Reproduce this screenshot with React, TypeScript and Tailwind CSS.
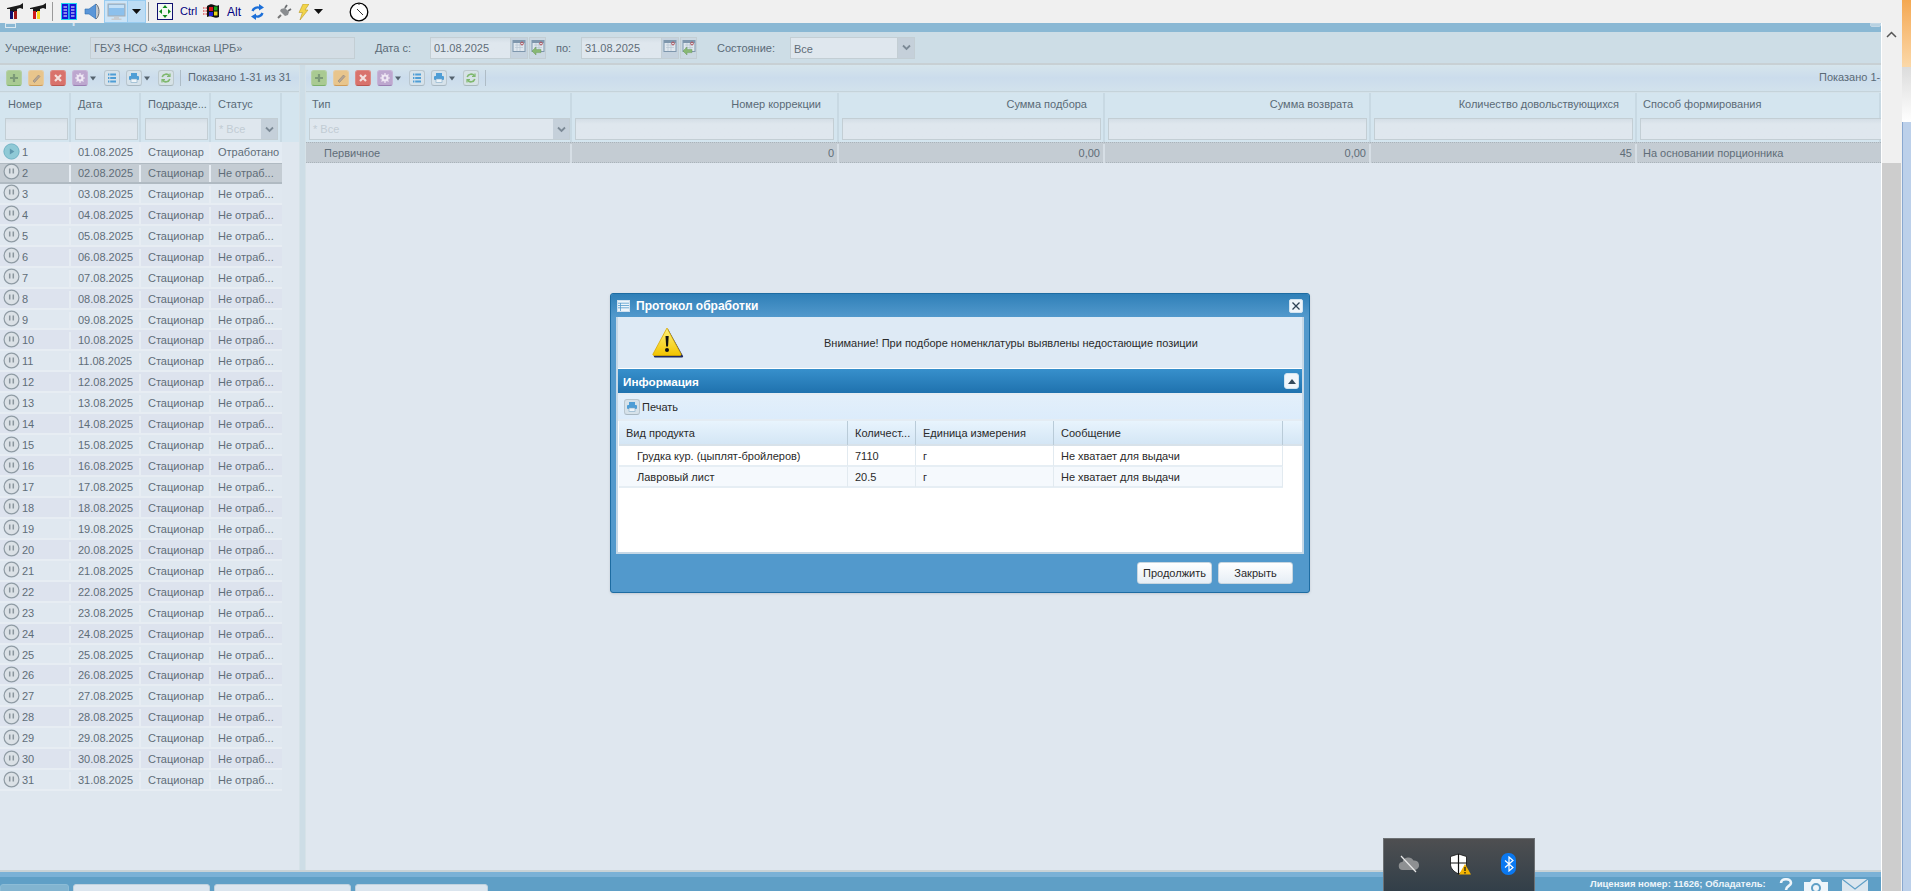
import React from "react";

const rows = Array.from({ length: 31 }, (_, i) => i + 1);

function Caret({ className = "" }: { className?: string }) {
  return (
    <svg width="8" height="5" viewBox="0 0 8 5" className={className}>
      <path d="M1 0.5h6L4 4.5z" fill="#55636e" />
    </svg>
  );
}

function Chevron() {
  return (
    <svg width="9" height="7" viewBox="0 0 9 7">
      <path d="M1 1.5L4.5 5L8 1.5" fill="none" stroke="#7c8a96" strokeWidth="1.8" />
    </svg>
  );
}

function ToolBtn({ kind }: { kind: "add" | "edit" | "del" | "gear" | "list" | "print" | "sync" }) {
  const tone = {
    add: "bg-[#a9ca92] border-b-[#7cb06a] border-[#b4cfa4]",
    edit: "bg-[#e8c58c] border-b-[#cf9c58] border-[#e6cca2]",
    del: "bg-[#d9726c] border-b-[#b95650] border-[#dc8a84]",
    gear: "bg-[#bda7cf] border-b-[#9b7fb2] border-[#c6b4d6]",
    list: "bg-[#d6e2ea] border-b-[#a9b8c2] border-[#b9c6ce]",
    print: "bg-[#d6e2ea] border-b-[#a9b8c2] border-[#b9c6ce]",
    sync: "bg-[#d6e2e6] border-b-[#a9b8bc] border-[#bcc8cc]",
  }[kind];
  return (
    <span className={`flex h-[16px] w-[16px] shrink-0 items-center justify-center rounded-[3px] border ${tone}`}>
      <svg width="12" height="12" viewBox="0 0 12 12">
        {kind === "add" && <path d="M6 2v8M2 6h8" stroke="#7c9a78" strokeWidth="2.2" />}
        {kind === "edit" && <path d="M3 9l5.5-6 1.5 1.5L4.5 10.5z" fill="#b5a595" stroke="#8f8478" strokeWidth=".6" />}
        {kind === "del" && <path d="M3 3l6 6M9 3l-6 6" stroke="#f3dfdd" strokeWidth="2.2" />}
        {kind === "gear" && (
          <g>
            <circle cx="6" cy="6" r="3.6" fill="#efe8f4" />
            <circle cx="6" cy="6" r="1.4" fill="#bda7cf" />
            <path d="M6 1v2M6 9v2M1 6h2M9 6h2M2.5 2.5l1.4 1.4M8.1 8.1l1.4 1.4M9.5 2.5L8.1 3.9M3.9 8.1l-1.4 1.4" stroke="#efe8f4" strokeWidth="1.2" />
          </g>
        )}
        {kind === "list" && <path d="M2 2.5h8M2 6h8M2 9.5h8" stroke="#4f9ed6" strokeWidth="2" strokeDasharray="1.4 .8 6 0" />}
        {kind === "print" && (
          <g>
            <rect x="3" y="1" width="6" height="3" fill="#4f9ed6" />
            <rect x="1" y="4" width="10" height="4" rx="1" fill="#4f9ed6" />
            <rect x="3" y="7" width="6" height="3.5" fill="#eef4f8" stroke="#7fa9c6" strokeWidth=".6" />
          </g>
        )}
        {kind === "sync" && (
          <g fill="none" stroke="#7fb86e" strokeWidth="1.6">
            <path d="M2.2 5A4 4 0 0 1 9.4 4" />
            <path d="M9.8 7A4 4 0 0 1 2.6 8" />
            <path d="M10 1.5v3H7M2 10.5v-3h3" strokeWidth="1.2" />
          </g>
        )}
      </svg>
    </span>
  );
}

function Toolbar({ right }: { right?: boolean }) {
  return (
    <div className={`flex h-[27px] items-center border-b border-[#c5d3da] bg-gradient-to-b from-[#d6e5ec] via-[#cbdcec] to-[#d2e2ec] ${right ? "pl-[5px]" : "pl-[6px]"}`}>
      <ToolBtn kind="add" />
      <span className="ml-[6px]"><ToolBtn kind="edit" /></span>
      <span className="ml-[6px]"><ToolBtn kind="del" /></span>
      <span className="ml-[6px]"><ToolBtn kind="gear" /></span>
      <Caret className="ml-[1px] shrink-0" />
      <span className="ml-[7px]"><ToolBtn kind="list" /></span>
      <span className="ml-[6px]"><ToolBtn kind="print" /></span>
      <Caret className="ml-[1px] shrink-0" />
      <span className="ml-[7px]"><ToolBtn kind="sync" /></span>
      <span className="ml-[6px] h-[16px] w-px shrink-0 bg-[#aebcc6]" />
      {right ? (
        <span className="ml-[1333px] shrink-0 pb-[2px] text-[#5a6a76]">Показано 1-1 из 1</span>
      ) : (
        <span className="ml-[7px] shrink-0 pb-[2px] text-[#5a6a76]">Показано 1-31 из 31</span>
      )}
    </div>
  );
}

function Input({ children, className = "" }: { children?: React.ReactNode; className?: string }) {
  return (
    <div className={`flex h-[22px] items-center border border-[#c3ced4] bg-gradient-to-b from-[#d4dee6] to-[#dfe7ee] to-[25%] pl-[3px] pt-[2px] text-[#5f6d78] ${className}`}>
      {children}
    </div>
  );
}

function CalIcon({ back }: { back?: boolean }) {
  return (
    <svg width="14" height="17" viewBox="0 0 14 17">
      <rect x="1" y="1.5" width="12" height="11" fill="#dfe7ee" stroke="#7f97ad" />
      <rect x="1" y="1.5" width="12" height="2.5" fill="#7f97ad" />
      <path d="M3 6h8M3 8.5h8M5 4v8M8 4v8" stroke="#b7c6d2" strokeWidth=".7" />
      <circle cx="10" cy="4.5" r="1.4" fill="none" stroke="#b4525a" />
      {back && <path d="M1 12l4-4v2.4h5v3.2H5V16z" fill="#88b874" stroke="#6d9a5c" strokeWidth=".5" />}
    </svg>
  );
}

function LeftPanel() {
  const heads = ["Номер", "Дата", "Подразде...", "Статус"];
  return (
    <div className="flex h-full w-[299px] shrink-0 flex-col bg-[#dfe7ef]">
      <Toolbar />
      <div className="relative flex h-[50px] border-t border-[#d4e2ea] bg-[#d4e5ef]">
        <div className="grid w-[282px] grid-cols-[71px_70px_70px_71px]">
          {heads.map((h, i) => (
            <div key={h} className={`border-r-2 border-[#c8d9e3] pt-[3px] ${i === 0 ? "pl-[5px]" : "pl-[4px]"}`}>
              <div className="h-[22px] pl-[3px] leading-[16px] text-[#5a6a76]">{h}</div>
              {i < 3 ? (
                <Input className="w-[63px]" />
              ) : (
                <div className="flex h-[22px] w-[63px] border border-[#c3ced4] bg-[#dfe7ee]">
                  <span className="flex-1 pl-[3px] leading-[21px] text-[#c2ccd4]">* Все</span>
                  <span className="flex w-[16px] items-center justify-center bg-[#c5d0da]"><Chevron /></span>
                </div>
              )}
            </div>
          ))}
        </div>
      </div>
      <div className="flex flex-col">
        {rows.map((n) => {
          const d = String(n).padStart(2, "0");
          const sel = n === 2;
          const bg = sel
            ? "bg-[#c4ccd3]"
            : n === 1
              ? "bg-[#e3ebf3]"
              : n % 2 === 0
                ? "bg-[#dde3ee]"
                : "bg-[#e0e8f0]";
          return (
            <div key={n} className={`grid h-[20.95px] w-[282px] grid-cols-[71px_70px_70px_71px] items-stretch border-b-2 ${sel ? "border-b-[#b0bac2] border-t border-t-[#b0bac2] pt-px" : "border-b-[#e7edf3] pt-[2px]"} ${bg} leading-[17px] text-[#5f6d78]`}>
              <div className="flex items-center border-r-2 border-[#e7edf3] pl-[3px]">
                {n === 1 ? (
                  <svg width="17" height="17" viewBox="0 0 17 17" className="-mt-[3px] shrink-0">
                    <circle cx="8.5" cy="8.5" r="7.6" fill="#8fc9d6" stroke="#6fb2c4" />
                    <path d="M6.8 5.4v6.2l4.6-3.1z" fill="#5f98ae" />
                  </svg>
                ) : (
                  <svg width="17" height="17" viewBox="0 0 17 17" className="-mt-[3px] shrink-0">
                    <circle cx="8.5" cy="8.5" r="7.4" fill="#dbe1e6" stroke="#8f9ba4" strokeWidth="1.2" />
                    <path d="M6.7 5.4v5M10.3 5.4v5" stroke="#8a959d" strokeWidth="1.5" />
                  </svg>
                )}
                <span className="ml-[2px]">{n}</span>
              </div>
              <div className="flex items-center border-r-2 border-[#e7edf3] pl-[7px]">{d}.08.2025</div>
              <div className="flex items-center border-r-2 border-[#e7edf3] pl-[7px]">Стационар</div>
              <div className="flex items-center whitespace-nowrap pl-[7px]">{n === 1 ? "Отработано" : "Не отраб..."}</div>
            </div>
          );
        })}
      </div>
    </div>
  );
}

function RightPanel() {
  const heads: [string, string][] = [
    ["Тип", "text-left"],
    ["Номер коррекции", "text-right pr-[16px]"],
    ["Сумма подбора", "text-right pr-[16px]"],
    ["Сумма возврата", "text-right pr-[16px]"],
    ["Количество довольствующихся", "text-right pr-[16px]"],
    ["Способ формирования", "text-left"],
  ];
  return (
    <div className="flex h-full min-w-0 flex-1 flex-col overflow-hidden bg-[#dfe7ef]">
      <Toolbar right />
      <div className="grid h-[50px] grid-cols-[266px_267px_266px_266px_266px_244px] border-t border-[#d4e2ea] bg-[#d4e5ef]">
        {heads.map(([h, c], i) => (
          <div key={h} className={`border-r-2 border-[#c8d9e3] pl-[3px] pt-[3px] ${i === 5 ? "border-r-0" : ""}`}>
            <div className={`h-[22px] whitespace-nowrap px-[3px] leading-[16px] text-[#5a6a76] ${c}`}>{h}</div>
            {i === 0 ? (
              <div className="flex h-[22px] w-[261px] border border-[#c3ced4] bg-[#dfe7ee]">
                <span className="flex-1 pl-[3px] leading-[21px] text-[#c2ccd4]">* Все</span>
                <span className="flex w-[16px] items-center justify-center bg-[#c5d0da]"><Chevron /></span>
              </div>
            ) : (
              <Input className={i === 5 ? "w-[260px]" : "w-[259px]"} />
            )}
          </div>
        ))}
      </div>
      <div className="grid h-[21px] grid-cols-[266px_267px_266px_266px_266px_244px] border-y border-dotted border-[#a9b3ba] bg-[#c4ccd3] pt-px leading-[19px] text-[#5f6d78]">
        <div className="border-r-2 border-[#d6dee5] pl-[18px]">Первичное</div>
        <div className="border-r-2 border-[#d6dee5] pr-[3px] text-right">0</div>
        <div className="border-r-2 border-[#d6dee5] pr-[3px] text-right">0,00</div>
        <div className="border-r-2 border-[#d6dee5] pr-[3px] text-right">0,00</div>
        <div className="border-r-2 border-[#d6dee5] pr-[3px] text-right">45</div>
        <div className="whitespace-nowrap pl-[6px]">На основании порционника</div>
      </div>
    </div>
  );
}

function FilterBar() {
  return (
    <div className="flex h-[33px] shrink-0 items-center border-b-2 border-[#c8d0d4] bg-[#cddde6] text-[#5a6a76]">
      <span className="ml-[5px] w-[85px] shrink-0 pt-[2px]">Учреждение:</span>
      <Input className="w-[265px] bg-none bg-[#d3dde5] text-[#5f6d78]">ГБУЗ НСО «Здвинская ЦРБ»</Input>
      <span className="ml-[20px] w-[55px] shrink-0 pt-[2px]">Дата с:</span>
      <Input className="w-[81px]">01.08.2025</Input>
      <span className="flex h-[22px] w-[17px] items-center justify-center border-y border-r border-[#c3ced4] bg-[#c5d2de]"><CalIcon /></span>
      <span className="ml-px flex h-[22px] w-[17px] items-center justify-center border border-[#c3ced4] bg-[#cbd8e2]"><CalIcon back /></span>
      <span className="ml-[10px] w-[25px] shrink-0 pt-[2px]">по:</span>
      <Input className="w-[81px]">31.08.2025</Input>
      <span className="flex h-[22px] w-[17px] items-center justify-center border-y border-r border-[#c3ced4] bg-[#c5d2de]"><CalIcon /></span>
      <span className="ml-px flex h-[22px] w-[17px] items-center justify-center border border-[#c3ced4] bg-[#cbd8e2]"><CalIcon back /></span>
      <span className="ml-[20px] w-[73px] shrink-0 pt-[2px]">Состояние:</span>
      <div className="flex h-[22px] w-[125px] border border-[#c3ced4] bg-[#dfe7ee]">
        <span className="flex-1 pl-[3px] leading-[23px] text-[#5f6d78]">Все</span>
        <span className="flex w-[17px] items-center justify-center border-l border-[#c3ced4] bg-[#c5d0da]"><Chevron /></span>
      </div>
    </div>
  );
}

function TopIcons() {
  return (
    <div className="flex h-[23px] shrink-0 items-center bg-[#f0f0f0]">
      {/* tools */}
      <svg width="17" height="17" viewBox="0 0 17 17" className="ml-[7px]">
        <path d="M0 5l13-3 3-2v6l-3-1-3 1v3H3V6H0z" fill="#1a1a1a" />
        <rect x="3" y="8" width="3" height="8" fill="#101070" />
        <rect x="7" y="8" width="3" height="8" fill="#a01818" />
      </svg>
      <svg width="17" height="17" viewBox="0 0 17 17" className="ml-[6px]">
        <path d="M0 5l13-3 3-2v6l-3-1-3 1v3H3V6H0z" fill="#1a1a1a" />
        <rect x="3" y="8" width="3" height="8" fill="#d01818" />
        <rect x="7" y="8" width="3" height="8" fill="#f4d820" />
      </svg>
      <span className="ml-[5px] h-[19px] w-px bg-[#9a9a9a]" />
      {/* book */}
      <svg width="16" height="17" viewBox="0 0 16 17" className="ml-[8px]">
        <rect x=".5" y=".5" width="15" height="16" fill="#1414d8" stroke="#22d8f0" />
        <rect x="7.2" y="1" width="1.4" height="15" fill="#22d8f0" />
        <path d="M2.5 4h3.5M2.5 7h3.500M2.5 10h3.500M2.5 13h3.500M10 4h3.500M10 7h3.500M10 10h3.500M10 13h3.500" stroke="#fff" strokeWidth="1" />
      </svg>
      {/* speaker */}
      <svg width="16" height="17" viewBox="0 0 16 17" className="ml-[7px]">
        <path d="M1 6h4l7-5v15l-7-5H1z" fill="#5a96d8" stroke="#2c6cb0" strokeWidth=".6" />
        <path d="M12 1c4 3 4 12 0 15" fill="#c4c8cc" stroke="#6a7078" />
      </svg>
      {/* highlighted */}
      <div className="ml-[4px] flex h-[23px] w-[42px] border border-[#99ccf0] bg-[#cce4f7]">
        <span className="flex w-[23px] items-center justify-center border-r border-[#99ccf0]">
          <svg width="19" height="18" viewBox="0 0 19 18">
            <rect x="1" y="1" width="17" height="12" fill="#8cc0ec" stroke="#a8acb0" />
            <rect x="2" y="2" width="15" height="3" fill="#c4e0f6" />
            <path d="M7 14h5v1.500h2.500V17h-10v-1.500H7z" fill="#c8ccd0" />
          </svg>
        </span>
        <span className="flex flex-1 items-center justify-center bg-[#bddcf4]">
          <svg width="9" height="5" viewBox="0 0 9 5"><path d="M0 0h9L4.500 5z" fill="#111" /></svg>
        </span>
      </div>
      <span className="ml-[2px] h-[19px] w-px bg-[#9a9a9a]" />
      {/* move */}
      <svg width="16" height="17" viewBox="0 0 16 17" className="ml-[8px]">
        <rect x=".5" y=".5" width="15" height="16" fill="#f4f8f4" stroke="#101070" />
        <path d="M8 2l2.500 3h-5zM8 15l2.500-3h-5zM2 8.500l3-2.500v5zM14 8.500l-3-2.500v5z" fill="#0c8a1c" />
      </svg>
      <span className="ml-[7px] font-['Liberation_Sans',sans-serif] text-[11px] leading-none text-[#000080]">Ctrl</span>
      {/* windows */}
      <svg width="17" height="17" viewBox="0 0 17 17" className="ml-[6px]">
        <path d="M4 3c3-2 5-2 7-1 2 1 4 1 5 0v12c-2 1-4 1-6 0s-4-1-6 0z" fill="#111" />
        <rect x="6" y="4" width="4" height="4" fill="#d81818" />
        <rect x="11" y="3.500" width="3.500" height="4" fill="#18a818" />
        <rect x="6" y="9" width="4" height="4" fill="#2020d8" />
        <rect x="11" y="8.500" width="3.500" height="4" fill="#e8d818" />
        <path d="M0 5h4M0 8h4M0 11h4" stroke="#d81818" strokeWidth="1" strokeDasharray="1.500 1" />
      </svg>
      <span className="ml-[7px] font-['Liberation_Sans',sans-serif] text-[12px] leading-none text-[#000080]">Alt</span>
      {/* refresh */}
      <svg width="13" height="16" viewBox="0 0 13 16" className="ml-[10px]">
        <g fill="none" stroke="#1c6fd8" strokeWidth="2.400">
          <path d="M1.500 7C2.500 4 6 2.500 9 4" />
          <path d="M11.500 9C10.500 12 7 13.500 4 12" />
        </g>
        <path d="M8 0l5 3.500-5 3zM5 16L0 12.500l5-3z" fill="#1c6fd8" />
      </svg>
      {/* plug */}
      <svg width="15" height="15" viewBox="0 0 15 15" className="ml-[13px]">
        <path d="M1 14l3-3" stroke="#777" strokeWidth="2" />
        <path d="M3 7l5 5 3-1 1-3-4-4-4 1z" fill="#8a8d90" />
        <path d="M8 4l2-3M11 7l3-2" stroke="#6a6d70" strokeWidth="1.800" />
      </svg>
      {/* bolt */}
      <svg width="11" height="16" viewBox="0 0 11 16" className="ml-[6px]">
        <path d="M5 0h6L7 6h3L2 16l2.400-7.500H1z" fill="#f2d44a" stroke="#b89a2a" strokeWidth=".6" />
      </svg>
      <svg width="9" height="5" viewBox="0 0 9 5" className="ml-[5px]"><path d="M0 0h9L4.500 5z" fill="#111" /></svg>
      {/* clock */}
      <svg width="20" height="20" viewBox="0 0 20 20" className="ml-[26px]">
        <circle cx="10" cy="10" r="8.800" fill="#fff" stroke="#000" strokeWidth="1.300" />
        <path d="M8 7l6 6M10 2v1" stroke="#333" />
      </svg>
    </div>
  );
}

function Dialog() {
  const gridCols = "grid-cols-[229px_68px_138px_229px_19px]";
  return (
    <div className="absolute left-[610px] top-[293px] flex h-[300px] w-[700px] flex-col rounded-[3px] border border-[#1d6ca2] bg-[#5299cc] text-[#2a2a2a] shadow-sm">
      <div className="flex h-[23px] shrink-0 items-center rounded-t-[3px] bg-gradient-to-b from-[#2f80b8] to-[#5299cc] pl-[6px]">
        <svg width="13" height="12" viewBox="0 0 13 12">
          <rect x=".5" y=".5" width="12" height="11" fill="#eef5fb" stroke="#cfe0ee" />
          <path d="M1 3.200h11M1 5.500h11M1 7.800h11M3.500 3v8" stroke="#5299cc" strokeWidth=".8" />
        </svg>
        <span className="ml-[6px] text-[12px] font-bold text-white">Протокол обработки</span>
        <span className="ml-auto mr-[6px] flex h-[14px] w-[14px] items-center justify-center rounded-[2px] border border-[#d2e4f0] bg-[#eef5fa]">
          <svg width="10" height="10" viewBox="0 0 10 10"><path d="M1.500 1.500l7 7M8.500 1.500l-7 7" stroke="#2d4254" strokeWidth="1.300" /></svg>
        </span>
      </div>
      <div className="mx-[5px] flex h-[237px] shrink-0 flex-col border-2 border-[#c6d8e6] border-t-0 bg-white">
        <div className="flex h-[51px] shrink-0 items-center bg-[#deeaf5]">
          <svg width="32" height="32" viewBox="0 0 32 32" className="ml-[34px] shrink-0">
            <defs>
              <linearGradient id="wy" x1="0" y1="0" x2="0" y2="1">
                <stop offset="0" stopColor="#fff27a" />
                <stop offset="1" stopColor="#f2c400" />
              </linearGradient>
            </defs>
            <path d="M16 2L31 29a1 1 0 0 1-1 1.500H3a1 1 0 0 1-1-1.500z" fill="#1f2a60" />
            <path d="M15 1L29 27a1 1 0 0 1-1 1.500H2a1 1 0 0 1-1-1.500z" fill="url(#wy)" stroke="#d8a800" strokeWidth=".8" />
            <path d="M13.500 9h3.200l-.7 10.500h-1.800z" fill="#111" />
            <circle cx="15" cy="23" r="2" fill="#111" />
          </svg>
          <span className="ml-[140px] whitespace-nowrap pt-[2px] text-[#2a2a2a]">Внимание! При подборе номенклатуры выявлены недостающие позиции</span>
        </div>
        <div className="mt-px flex h-[24px] shrink-0 items-center bg-gradient-to-b from-[#3790cc] to-[#1f72ae] pl-[5px] pr-[3px]">
          <span className="pt-px text-[11.7px] font-bold text-white">Информация</span>
          <span className="ml-auto flex h-[16px] w-[15px] items-center justify-center rounded-[3px] border border-[#d2e4f0] bg-[#f0f6fb]">
            <svg width="8" height="5" viewBox="0 0 8 5"><path d="M0 5h8L4 0z" fill="#344a5c" /></svg>
          </span>
        </div>
        <div className="flex h-[28px] shrink-0 items-center border-y-2 border-[#e4ecf3] bg-gradient-to-b from-[#e3effa] to-[#dcecfb] pl-[6px]">
          <ToolBtn kind="print" />
          <span className="ml-[2px] pt-px text-[#2a2a2a]">Печать</span>
        </div>
        <div className={`ml-px grid h-[25px] shrink-0 ${gridCols} border-b-2 border-[#d8e2ea] bg-gradient-to-b from-[#e8f4fd] to-[#d4e6f5] leading-[24px] text-[#2a2a2a]`}>
          {["Вид продукта", "Количест...", "Единица измерения", "Сообщение"].map((h) => (
            <div key={h} className="whitespace-nowrap border-r border-[#b9cbd8] pl-[7px]">{h}</div>
          ))}
          <div />
        </div>
        {[
          ["Грудка кур. (цыплят-бройлеров)", "7110", "г", "Не хватает для выдачи", "bg-white"],
          ["Лавровый лист", "20.5", "г", "Не хватает для выдачи", "bg-[#f5f9fd]"],
        ].map(([a, b, c, d, bg]) => (
          <div key={a} className={`ml-px grid h-[21px] w-[664px] shrink-0 grid-cols-[229px_68px_138px_229px] border-b-2 border-[#e6eef4] ${bg} leading-[20px] text-[#2a2a2a]`}>
            <div className="border-r border-[#e2eaf0] pl-[18px]">{a}</div>
            <div className="border-r border-[#e2eaf0] pl-[7px]">{b}</div>
            <div className="border-r border-[#e2eaf0] pl-[7px]">{c}</div>
            <div className="border-r border-[#e2eaf0] pl-[7px]">{d}</div>
          </div>
        ))}
      </div>
      <div className="flex flex-1 items-center justify-end gap-[6px] pr-[16px]">
        {[
          ["Продолжить", "w-[75px]"],
          ["Закрыть", "w-[75px]"],
        ].map(([t, w]) => (
          <div key={t} className={`flex h-[22px] ${w} items-center justify-center rounded-[3px] border border-[#c8d6e0] bg-gradient-to-b from-white to-[#e6eef5] text-[#2a2a2a]`}>{t}</div>
        ))}
      </div>
    </div>
  );
}

function Tray() {
  return (
    <div className="absolute left-[1383px] top-[838px] flex h-[53px] w-[152px] items-center border border-[#6d7174] border-b-0 bg-gradient-to-b from-[#4e4f51] to-[#323f49] pb-[3px]">
      <svg width="22" height="18" viewBox="0 0 22 18" className="ml-[14px]">
        <path d="M5 15a4 4 0 0 1-.5-8 6 6 0 0 1 11-1.500A4.500 4.500 0 0 1 17 15z" fill="#8e9092" />
        <path d="M3 1l15 16" stroke="#e8e8e8" strokeWidth="1.200" />
      </svg>
      <svg width="22" height="22" viewBox="0 0 22 22" className="ml-[29px]">
        <path d="M9.500 1l8 2.500V11c0 5-4 8-8 10-4-2-8-5-8-10V3.500z" fill="#fff" stroke="#111" strokeWidth=".8" />
        <path d="M9.500 1v20M1.500 10h16" stroke="#111" strokeWidth="1.200" />
        <path d="M16 11l6 10.500H10z" fill="#f4b400" />
        <path d="M16 14v4M16 19v1.500" stroke="#111" strokeWidth="1.200" />
      </svg>
      <div className="ml-[30px] flex h-[22px] w-[15px] items-center justify-center rounded-[7px] bg-[#0a78f0]">
        <svg width="10" height="16" viewBox="0 0 10 16">
          <path d="M1 4.500l8 7L5 15V1l4 3.500-8 7" fill="none" stroke="#fff" strokeWidth="1.200" />
        </svg>
      </div>
    </div>
  );
}

export default function App() {
  return (
    <div className="relative flex h-[891px] w-[1911px] overflow-hidden font-['Liberation_Sans',sans-serif] text-[11px]">
      <div className="flex h-full w-[1902px] shrink-0 flex-col">
        <TopIcons />
        <div className="flex min-h-0 flex-1">
          <div className="flex w-[1881px] shrink-0 flex-col">
            <div className="relative flex h-[9px] shrink-0 items-end overflow-hidden bg-[#8ab8d4] pl-[5px]">
              <span className="h-[5px] w-[11px] shrink-0 self-start border border-[#dbe8f0]" />
              <span className="ml-[8px] -translate-y-[7px] whitespace-nowrap text-[13px] font-bold leading-none text-[#d6e6f0]">Меню-требование</span>
              <span className="absolute right-0 top-0 h-[4px] w-[11px] rounded-b-[2px] border border-[#c4d8e6] bg-[#b8d2e2]" />
            </div>
            <FilterBar />
            <div className="flex min-h-0 flex-1">
              <LeftPanel />
              <div className="w-[7px] shrink-0 border-x border-[#d6e2e8] bg-[#cddde6]" />
              <RightPanel />
            </div>
            <div className="h-[2px] shrink-0 bg-[#c8d2d6]" />
            <div className="h-[5px] shrink-0 bg-[#7ab1d6]" />
            <div className="flex h-[14px] shrink-0 items-start overflow-hidden bg-[#5f9fc6] pt-[7px]">
              <div className="h-[20px] w-[69px] shrink-0 rounded-t-[3px] border border-[#8cbcd6] bg-[#82b4d0]" />
              <div className="ml-[4px] h-[20px] w-[137px] shrink-0 rounded-t-[3px] border border-[#c0d2de] bg-[#dbe5ee]" />
              <div className="ml-[4px] h-[20px] w-[137px] shrink-0 rounded-t-[3px] border border-[#c0d2de] bg-[#dbe5ee]" />
              <div className="ml-[4px] h-[20px] w-[133px] shrink-0 rounded-t-[3px] border border-[#c0d2de] bg-[#dbe5ee]" />
              <span className="ml-[1102px] shrink-0 -translate-y-[7px] whitespace-nowrap text-[9.5px] font-bold leading-[14px] text-[#eef5fa]">Лицензия номер: 11626; Обладатель:</span>
              <svg width="14" height="14" viewBox="0 0 14 14" className="ml-[13px] shrink-0 -translate-y-[6px]">
                <path d="M2 5c0-5 10-5 10 0 0 3-5 3-5 7" fill="none" stroke="#eef5fa" strokeWidth="2.600" />
              </svg>
              <svg width="24" height="14" viewBox="0 0 24 14" className="ml-[11px] shrink-0 -translate-y-[6px]">
                <path d="M0 4h6l2-3h8l2 3h6v12H0z" fill="#eef5fa" />
                <circle cx="12" cy="10" r="4" fill="none" stroke="#5f9fc6" strokeWidth="2" />
              </svg>
              <svg width="26" height="14" viewBox="0 0 26 14" className="ml-[14px] shrink-0 -translate-y-[6px]">
                <path d="M0 1h26v14H0z" fill="#dbe6ee" />
                <path d="M0 1l13 10L26 1" fill="none" stroke="#5f9fc6" strokeWidth="1.200" />
              </svg>
            </div>
          </div>
          <div className="relative w-[21px] shrink-0 border-l border-white bg-[#f0f0f0]">
            <svg width="11" height="7" viewBox="0 0 11 7" className="absolute left-[4px] top-[8px]">
              <path d="M1 6l4.500-4.500L10 6" fill="none" stroke="#555" strokeWidth="1.500" />
            </svg>
            <div className="absolute bottom-0 left-0 right-px top-[140px] bg-[#cdcdcd]" />
          </div>
        </div>
      </div>
      <div className="flex flex-1 flex-col">
        <div className="h-[67px] bg-gradient-to-b from-[#f4a850] to-[#fbd8a8]" />
        <div className="h-[55px] bg-gradient-to-b from-[#dcdcdc] to-[#ffffff]" />
        <div className="flex-1 border-l border-[#8aa8d0] bg-[#bcd0ea]" />
      </div>
      <Dialog />
      <Tray />
    </div>
  );
}
